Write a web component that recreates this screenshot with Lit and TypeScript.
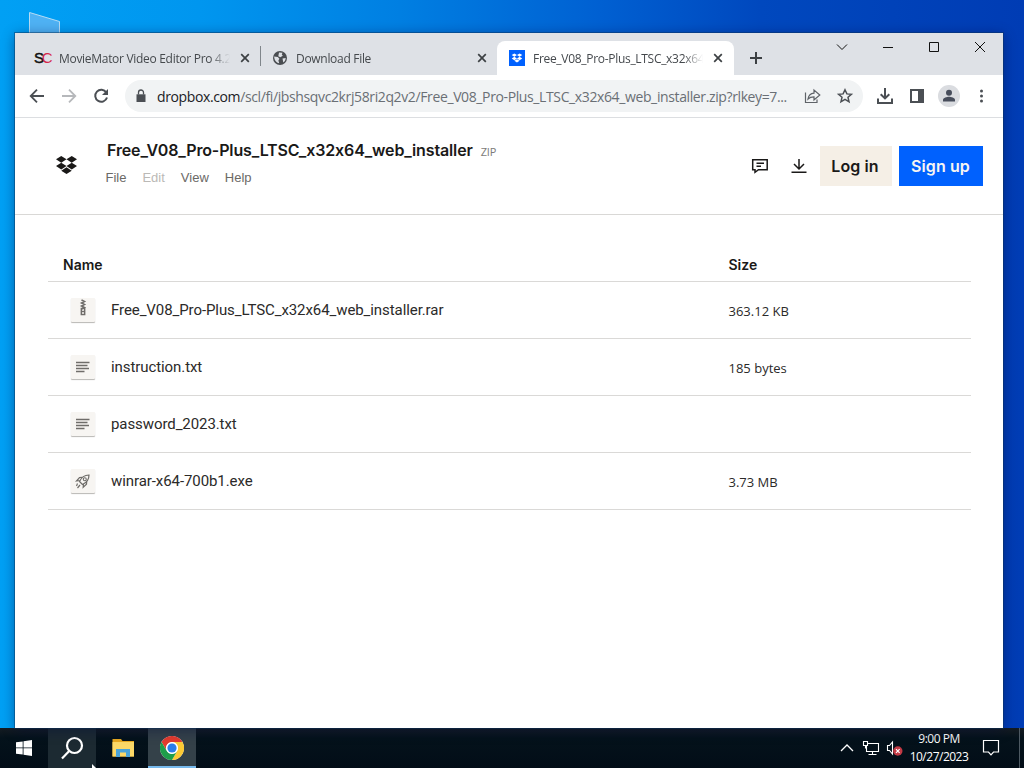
import { LitElement, html, css, svg, nothing } from "lit";
import { customElement, property, state } from "lit/decorators.js";
import { classMap } from "lit/directives/class-map.js";

const dropboxMark = svg`
  <path d="M5.5 0 11 3.4 5.5 6.8 0 3.4zM16.5 0 22 3.4 16.5 6.8 11 3.4zM5.5 6.8 11 10.2 5.5 13.6 0 10.2zM16.5 6.8 22 10.2 16.5 13.6 11 10.2zM5.5 14.9 11 11.5 16.5 14.9 11 18.3z" />
`;

const icons: Record<string, unknown> = {
  sc: html`<span class="sc"><b>S</b><i>C</i></span>`,
  globe: html`<svg width="16" height="16" viewBox="0 0 16 16">
    <circle cx="8" cy="8" r="7" fill="#4a4d51" />
    <path d="M2.2 6.5 5.8 7l1.600 1.800-1 1.600.8 2.800C4.200 12.600 2.200 10 2.200 6.500zM7 2.600l3.500.1-.7 1.800 1 1.200-2.500 1.500-2-1zM10.500 8.500l3.200-.5c-.1 2-1 3.600-2.400 4.600l-.4-2z" fill="#dee1e6" />
  </svg>`,
  dropbox: html`<svg width="16" height="16" viewBox="0 0 16 16">
    <rect width="16" height="16" fill="#0061fe" />
    <g fill="#fff" transform="translate(2.7 3.4) scale(.48 .5)">${dropboxMark}</g>
  </svg>`,
};

const close = html`<svg width="16" height="16" viewBox="0 0 16 16">
  <path d="M4.200 4.200l7.600 7.600M11.800 4.200l-7.600 7.600" stroke="#3c4043" stroke-width="1.700" fill="none" />
</svg>`;

@customElement("browser-tab")
export class BrowserTab extends LitElement {
  @property() icon = "globe";
  @property() label = "";
  @property({ type: Boolean, reflect: true }) active = false;

  static styles = css`
    :host {
      box-sizing: border-box;
      display: flex;
      align-items: center;
      height: 34px;
      font: 12px "Open Sans", "Noto Sans", sans-serif;
      color: #45494d;
    }
    :host([active]) {
      background: #fff;
      border-radius: 8px 8px 0 0;
    }
    .icon {
      flex: none;
      width: 16px;
      height: 16px;
    }
    .title {
      flex: 1;
      min-width: 0;
      margin-left: 8px;
      overflow: hidden;
      white-space: nowrap;
      letter-spacing: -0.3px;
      mask-image: linear-gradient(to right, #000 calc(100% - 22px), transparent calc(100% - 2px));
    }
    .close {
      flex: none;
      width: 16px;
      height: 16px;
      margin-left: 5px;
    }
    svg {
      display: block;
    }
    .sc {
      display: flex;
      margin-left: -1px;
      font: 15px/15px "Liberation Sans", sans-serif;
      letter-spacing: -2.2px;
    }
    .sc b {
      color: #111;
      font-weight: 400;
      -webkit-text-stroke: 0.5px #111;
    }
    .sc i {
      color: #d6264a;
      font-style: normal;
    }
  `;

  render() {
    return html`
      <div class="icon">${icons[this.icon]}</div>
      <div class="title">${this.label}</div>
      <div class="close">${close}</div>
    `;
  }
}

interface FileRow {
  kind: string;
  name: string;
  size?: string;
}

const glyphs: Record<string, unknown> = {
  archive: svg`<path d="M10.500 2l3 1.500-3 1.500 3 1.500-3 1.500 3 1.500-3 1.500" stroke-width="1.500" /><path d="M10.300 10.500h3.400v6h-3.400zM10.300 13.500h3.400" stroke-width="1.400" />`,
  text: svg`<path d="M5 7.500h13.500M5 10.500h11.500M5 13.500h13M5 16.500h8.500" stroke-width="1.400" />`,
  exe: svg`<path d="M8.500 12.500c1.700-4 4.800-6.500 9.500-6.500 0 4.500-2.500 7.800-6.500 9.500zM9 11.500l-3.500.5 3-3.500 2.500-.2M12.500 15l-.3 3.200 3.300-3 .2-2.700M6.500 14.500l-1 2.500M9 16l-2.500 3" stroke-width="1.200" /><circle cx="13.800" cy="10.200" r="1.500" stroke-width="1.100" />`,
};

@customElement("file-table")
export class FileTable extends LitElement {
  @property({ attribute: false }) files: FileRow[] = [];

  static styles = css`
    :host {
      display: block;
      font-family: Roboto, sans-serif;
      color: #1a1918;
    }
    .row {
      box-sizing: border-box;
      display: grid;
      grid-template-columns: 680.5px 1fr;
      align-items: center;
      height: 57px;
      border-bottom: 1px solid #dad9d7;
    }
    .head {
      height: 34px;
      font: 600 14px Inter, sans-serif;
    }
    .head .name {
      padding-left: 15px;
    }
    .name {
      display: flex;
      align-items: center;
    }
    .thumb {
      width: 24px;
      height: 24px;
      margin: 0 16px 0 23px;
      background: #f7f5f2;
      border-radius: 1px;
      box-shadow: 0 1px 1px #b9b7b4;
    }
    .thumb svg {
      display: block;
      fill: none;
      stroke: #6f6d6a;
    }
    .label {
      font-size: 15px;
      letter-spacing: -0.08px;
      color: #2b2a29;
    }
    .size {
      font: 13px "Open Sans", sans-serif;
      padding-top: 1px;
      color: #2b2a29;
    }
    .head .size {
      font: inherit;
      padding-top: 0;
      color: inherit;
    }
  `;

  render() {
    return html`
      <div class="row head">
        <div class="name">Name</div>
        <div class="size">Size</div>
      </div>
      ${this.files.map(
        (f) => html`
          <div class="row">
            <div class="name">
              <div class="thumb">
                <svg width="24" height="24" viewBox="0 0 24 24">${glyphs[f.kind]}</svg>
              </div>
              <span class="label">${f.name}</span>
            </div>
            <div class="size">${f.size ?? nothing}</div>
          </div>
        `
      )}
    `;
  }
}

@customElement("task-bar")
export class TaskBar extends LitElement {
  static styles = css`
    :host {
      display: flex;
      height: 40px;
      background: linear-gradient(#151c22, #04121b 25%, #020d17);
      color: #fff;
      font: 12px "Open Sans", sans-serif;
    }
    .app {
      box-sizing: border-box;
      display: flex;
      align-items: center;
      justify-content: center;
      width: 48px;
    }
    .search {
      background: #1c2a32;
    }
    .explorer {
      width: 52px;
      padding-left: 1px;
    }
    .running {
      background: #344149;
      border-bottom: 2px solid #76b9ed;
      padding-top: 2px;
    }
    .tray {
      display: flex;
      align-items: center;
      margin-left: auto;
    }
    .tray svg {
      display: block;
    }
    .net {
      margin-left: 8px;
    }
    .vol {
      margin-left: 6px;
    }
    .clock {
      width: 72px;
      text-align: center;
      line-height: 18px;
      letter-spacing: -0.5px;
      white-space: nowrap;
    }
    .note {
      margin-left: 7px;
    }
    .peek {
      width: 4px;
      height: 40px;
      margin-left: 19px;
      border-left: 1px solid #4d5962;
    }
  `;

  render() {
    return html`
      <div class="app">
        <svg width="16" height="16" viewBox="0 0 16 16" fill="#fff">
          <path d="M0 2.300 6.700 1.400V7.500H0zM7.500 1.300 16 0v7.500H7.500zM0 8.300h6.700v6.300L0 13.700zM7.500 8.300H16V16l-8.500-1.200z" />
        </svg>
      </div>
      <div class="app search">
        <svg width="24" height="24" viewBox="0 0 24 24" fill="none" stroke="#fff" stroke-width="2.200">
          <circle cx="14.500" cy="9.500" r="7.500" />
          <path d="M9.200 15 2 22.500" />
        </svg>
      </div>
      <div class="app explorer">
        <svg width="24" height="20" viewBox="0 0 24 20">
          <path d="M1.500 1H10l1.500 2H23v15.500H1.500z" fill="#e8a820" />
          <path d="M1.500 4H23v14.500H1.500z" fill="#fcd867" />
          <path d="M5 19v-8h14v8h-4v-4.500H9V19z" fill="#4aa3d8" />
        </svg>
      </div>
      <div class="app running">
        <svg width="24" height="24" viewBox="0 0 24 24">
          <circle cx="12" cy="12" r="12" fill="#fff" />
          <path d="M1.600 6A12 12 0 0 1 22.400 6H12a6 6 0 0 0-5.200 9z" fill="#e33b2e" />
          <path d="M22.400 6A12 12 0 0 1 12 24l5.200-9A6 6 0 0 0 12 6z" fill="#fcc934" />
          <path d="M1.600 6A12 12 0 0 0 12 24l5.200-9a6 6 0 0 1-10.400 0z" fill="#1e9e4a" />
          <circle cx="12" cy="12" r="5.800" fill="#fff" />
          <circle cx="12" cy="12" r="4.600" fill="#2b7de9" />
        </svg>
      </div>
      <div class="tray">
        <svg width="14" height="8" viewBox="0 0 14 8" fill="none" stroke="#fff" stroke-width="1.300">
          <path d="M1 7 7 1l6 6" />
        </svg>
        <svg class="net" width="18" height="16" viewBox="0 0 18 16" fill="none" stroke="#fff" stroke-width="1.100">
          <path d="M5.500 3.500h11v8h-12V6M10.500 11.500v3M6.500 14.500h8M1.500 1.500h4v4h-4zM3.500 5.500v3" />
        </svg>
        <svg class="vol" width="17" height="18" viewBox="0 0 17 18" fill="none" stroke="#fff" stroke-width="1.100">
          <path d="M1.500 6.500h2l3-3.500v12l-3-3.500h-2z" />
          <circle cx="11.800" cy="12" r="4.700" fill="#c33a45" stroke="none" />
          <path d="M10 10.200l3.600 3.600M13.600 10.200 10 13.800" stroke-width="1.200" />
        </svg>
        <div class="clock">9:00 PM<br />10/27/2023</div>
        <svg class="note" width="18" height="18" viewBox="0 0 18 18" fill="none" stroke="#fff" stroke-width="1.200">
          <path d="M1.500 1.500h15v11.500h-5L9 15.800 6.500 13h-5z" />
        </svg>
        <div class="peek"></div>
      </div>
    `;
  }
}

@customElement("app-root")
export class AppRoot extends LitElement {
  @state() files: FileRow[] = [
    { kind: "archive", name: "Free_V08_Pro-Plus_LTSC_x32x64_web_installer.rar", size: "363.12 KB" },
    { kind: "text", name: "instruction.txt", size: "185 bytes" },
    { kind: "text", name: "password_2023.txt" },
    { kind: "exe", name: "winrar-x64-700b1.exe", size: "3.73 MB" },
  ];
  @state() menu = ["File", "Edit", "View", "Help"];

  static styles = css`
    :host {
      box-sizing: border-box;
      display: flex;
      flex-direction: column;
      position: relative;
      width: 1024px;
      height: 768px;
      overflow: hidden;
      background: linear-gradient(to right, #01a0f4 0, #0096ef 200px, #007fe2 400px, #0060d2 600px, #0048be 760px, #003cb4 1024px);
    }
    .desktop {
      display: flex;
      flex: 1;
      padding: 33px 21px 0 15px;
    }
    .shortcut {
      position: absolute;
      left: 29px;
      top: 12px;
    }
    .window {
      position: relative;
      display: flex;
      flex: 1;
      flex-direction: column;
      background: #fff;
      box-shadow: 0 0 0 1px rgba(10, 50, 90, 0.45), 0 2px 12px rgba(0, 10, 60, 0.45);
    }
    .strip {
      display: flex;
      height: 34px;
      padding-top: 8px;
      background: #dee1e6;
    }
    .first {
      width: 245px;
      padding: 0 7px 0 20px;
    }
    .second {
      width: 236px;
      padding: 0 7px 0 11px;
    }
    .divider {
      width: 1px;
      height: 20px;
      margin-top: 5px;
      background: #80868b;
    }
    .third {
      width: 237px;
      padding: 0 8px 0 12px;
    }
    .plus {
      margin: 9px 0 0 14px;
    }
    .caption {
      display: flex;
      gap: 30px;
      margin: -2px 15px 0 auto;
      fill: none;
      stroke: #111;
    }
    .toolbar {
      box-sizing: border-box;
      display: flex;
      align-items: center;
      height: 43px;
      padding: 0 12px;
      border-bottom: 1px solid #dcdee1;
    }
    .nav {
      display: flex;
      gap: 12px;
    }
    .omnibox {
      box-sizing: border-box;
      display: flex;
      align-items: center;
      width: 738px;
      height: 32px;
      margin-left: 14px;
      padding: 0 8px;
      border-radius: 16px;
      background: #f1f3f4;
      font: 14px "Open Sans", "Noto Sans", sans-serif;
      color: #6a6f75;
      white-space: nowrap;
    }
    .url {
      flex: 1;
      margin-left: 8px;
      letter-spacing: -0.38px;
    }
    .host {
      color: #202124;
    }
    .star {
      margin-left: 12px;
    }
    .actions {
      display: flex;
      align-items: center;
      gap: 12px;
      margin-left: 12px;
    }
    .avatar {
      display: flex;
      width: 22px;
      height: 22px;
      margin: 0 -1px;
      border-radius: 50%;
      background: #dadce0;
    }
    .header {
      box-sizing: border-box;
      display: flex;
      align-items: flex-start;
      height: 97px;
      padding: 0 20px 0 40.5px;
      border-bottom: 1px solid #d9d8d6;
    }
    .mark {
      margin-top: 38px;
    }
    .heading {
      margin: 21px 0 0 29px;
      font-family: "Liberation Sans", sans-serif;
    }
    h1 {
      margin: 0 0 0 1.5px;
      font: 600 16px/22px Inter, sans-serif;
      font-feature-settings: "calt" 0;
      letter-spacing: -0.13px;
      color: #1a1918;
    }
    .ext {
      margin-left: 4px;
      font: 11px "Open Sans", sans-serif;
      color: #7c7b79;
    }
    .menu {
      display: flex;
      gap: 16px;
      margin-top: 8px;
      font-size: 13px;
      line-height: 17px;
      color: #6b6966;
    }
    .off {
      color: #bbb9b6;
    }
    .buttons {
      display: flex;
      align-items: center;
      margin: 28px 0 0 auto;
    }
    .download {
      margin: 0 11px 0 19px;
    }
    .btn {
      box-sizing: border-box;
      display: flex;
      align-items: center;
      justify-content: center;
      width: 72px;
      height: 40px;
      padding-right: 2px;
      background: #f5efe6;
      color: #1a1918;
      font: 600 16px Inter, sans-serif;
      letter-spacing: 0.1px;
      white-space: nowrap;
    }
    .primary {
      width: 84px;
      margin-left: 7px;
      padding-right: 1px;
      background: #0061fe;
      color: #f7f5f2;
    }
    .files {
      margin: 33px 32px 0 33px;
    }
    .pointer {
      position: absolute;
      left: 92px;
      top: 764px;
    }
    svg {
      flex: none;
    }
  `;

  renderCaption() {
    return html`
      <div class="caption">
        <svg width="16" height="16" viewBox="0 0 16 16"><path d="M3 5.500l5 5 5-5" /></svg>
        <svg width="16" height="16" viewBox="0 0 16 16"><path d="M3 8.500h10" /></svg>
        <svg width="16" height="16" viewBox="0 0 16 16"><path d="M3.500 3.500h9v9h-9z" /></svg>
        <svg width="16" height="16" viewBox="0 0 16 16"><path d="M3 3l10 10M13 3 3 13" /></svg>
      </div>
    `;
  }

  renderToolbar() {
    return html`
      <div class="toolbar">
        <div class="nav">
          <svg width="20" height="20" viewBox="0 0 20 20" fill="none" stroke="#4b4f54" stroke-width="1.800">
            <path d="M17 10H4.500M10 3.700 3.700 10l6.300 6.300" />
          </svg>
          <svg width="20" height="20" viewBox="0 0 20 20" fill="none" stroke="#b6b8bb" stroke-width="1.800">
            <path d="M3 10h12.500M10 3.700l6.300 6.300-6.300 6.300" />
          </svg>
          <svg width="20" height="20" viewBox="0 0 20 20" fill="none" stroke="#4b4f54" stroke-width="2">
            <path d="M15.300 6.500A6 6 0 1 0 16 11.500" />
            <path d="M17 3v6h-6z" fill="#4b4f54" stroke="none" />
          </svg>
        </div>
        <div class="omnibox">
          <svg width="16" height="16" viewBox="0 0 16 16">
            <path d="M3.500 6.300h9v7.700h-9z" fill="#4b4f54" />
            <path d="M5.500 6.500V4.500a2.500 2.500 0 0 1 5 0v2" fill="none" stroke="#4b4f54" stroke-width="1.300" />
          </svg>
          <div class="url"><span class="host">dropbox.com</span>/scl/fi/jbshsqvc2krj58ri2q2v2/Free_V08_Pro-Plus_LTSC_x32x64_web_installer.zip?rlkey=7...</div>
          <svg width="20" height="20" viewBox="0 0 20 20" fill="none" stroke="#5f6368" stroke-width="1.200">
            <path d="M2.500 6.500v10h11.500v-3" />
            <path d="M5 13c.6-3.600 2.800-5.600 6-5.800V4l5.800 5-5.800 5v-3.200c-2.600 0-4.600.7-6 2.200z" />
          </svg>
          <svg class="star" width="20" height="20" viewBox="0 0 20 20" fill="none" stroke="#4b4f54" stroke-width="1.500">
            <path d="M10 3.700l1.900 4.200 4.500.4-3.400 3 1 4.500-4-2.400-4 2.400 1-4.500-3.400-3 4.500-.4z" />
          </svg>
        </div>
        <div class="actions">
          <svg width="20" height="20" viewBox="0 0 20 20" fill="none" stroke="#4b4f54" stroke-width="2">
            <path d="M10 2v10M5.700 8.200l4.300 4.200 4.300-4.200M3 12.500V17h14v-4.500" />
          </svg>
          <svg width="20" height="20" viewBox="0 0 20 20">
            <path d="M3 3h14v14H3zM5 5v10h6V5z" fill="#4b4f54" fill-rule="evenodd" />
          </svg>
          <div class="avatar">
            <svg width="22" height="22" viewBox="0 0 22 22" fill="#474d5b">
              <circle cx="11" cy="7.700" r="3" />
              <path d="M5 16.500v-1.700c0-2 4-3 6-3s6 1 6 3v1.700z" />
            </svg>
          </div>
          <svg width="20" height="20" viewBox="0 0 20 20" fill="#4b4f54">
            <circle cx="10.500" cy="5" r="1.500" />
            <circle cx="10.500" cy="10" r="1.500" />
            <circle cx="10.500" cy="15" r="1.500" />
          </svg>
        </div>
      </div>
    `;
  }

  renderHeader() {
    return html`
      <div class="header">
        <svg class="mark" width="21" height="18" viewBox="0 0 22 18.300" preserveAspectRatio="none" fill="#1a1918">${dropboxMark}</svg>
        <div class="heading">
          <h1>Free_V08_Pro-Plus_LTSC_x32x64_web_installer <span class="ext">ZIP</span></h1>
          <div class="menu">
            ${this.menu.map((m) => html`<span class=${classMap({ off: m === "Edit" })}>${m}</span>`)}
          </div>
        </div>
        <div class="buttons">
          <svg width="20" height="20" viewBox="0 0 20 20" fill="none" stroke="#1a1918" stroke-width="1.500">
            <path d="M2.700 3.700h14.500v10H8.500L5 16.300v-2.600H2.700zM6.500 7.200h7.500M6.500 10.200h4.500" />
          </svg>
          <svg class="download" width="20" height="20" viewBox="0 0 20 20" fill="none" stroke="#1a1918" stroke-width="1.500">
            <path d="M10 3v9.500M5 8l5 5 5-5M2.500 16.300h15" />
          </svg>
          <div class="btn">Log in</div>
          <div class="btn primary">Sign up</div>
        </div>
      </div>
    `;
  }

  render() {
    return html`
      <svg class="shortcut" width="32" height="24" viewBox="0 0 32 24">
        <path d="M.5.500 30.500 9.500V24H.5z" fill="#4fb2f4" stroke="#b5dcf5" />
      </svg>
      <div class="desktop">
        <div class="window">
          <div class="strip">
            <browser-tab class="first" icon="sc" label="MovieMator Video Editor Pro 4.2"></browser-tab>
            <div class="divider"></div>
            <browser-tab class="second" icon="globe" label="Download File"></browser-tab>
            <browser-tab class="third" icon="dropbox" label="Free_V08_Pro-Plus_LTSC_x32x64" active></browser-tab>
            <svg class="plus" width="16" height="16" viewBox="0 0 16 16" stroke="#3c4043" stroke-width="2">
              <path d="M8 2v12M2 8h12" />
            </svg>
            ${this.renderCaption()}
          </div>
          ${this.renderToolbar()} ${this.renderHeader()}
          <file-table class="files" .files=${this.files}></file-table>
        </div>
      </div>
      <task-bar></task-bar>
      <svg class="pointer" width="5" height="4" viewBox="0 0 5 4"><path d="M0 0l4 4H0z" fill="#fff" /></svg>
    `;
  }
}
